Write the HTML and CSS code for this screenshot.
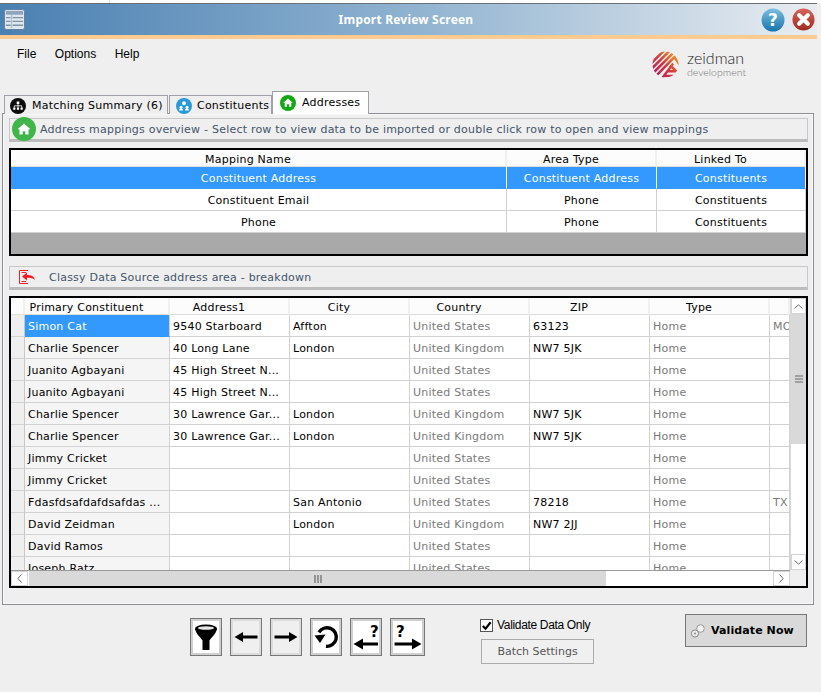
FILE: index.html
```html
<!DOCTYPE html>
<html lang="en">
<head>
<meta charset="utf-8">
<title>Import Review Screen</title>
<link rel="stylesheet" href="styles.css">
</head>
<body>
<div class="strip"><span class="strip-line"></span></div>
<header class="titlebar">
  <svg class="app-icon" viewBox="0 0 22 22">
    <rect x="0.5" y="0.5" width="21" height="21" rx="2" fill="#dfe6ee" stroke="#5c7fa3"/>
    <rect x="2" y="2" width="18" height="4" fill="#8fa5bb"/>
    <path d="M2 9h5M9 9h11M2 13h5M9 13h11M2 17h5M9 17h11" stroke="#7e93a8" stroke-width="1.4"/>
    <path d="M8 6v14" stroke="#a9b8c7"/>
  </svg>
  <h1 class="title">Import Review Screen</h1>
  <div class="win-buttons">
    <svg class="help" viewBox="0 0 24 24">
      <defs><linearGradient id="hg" x1="0" y1="0" x2="0" y2="1"><stop offset="0" stop-color="#7cc0e2"/><stop offset="1" stop-color="#1673ab"/></linearGradient></defs>
      <circle cx="12" cy="12" r="11.5" fill="url(#hg)"/>
      <text x="12" y="18" text-anchor="middle" class="help-q">?</text>
    </svg>
    <svg class="close" viewBox="0 0 24 24">
      <defs><linearGradient id="cg" x1="0" y1="0" x2="0" y2="1"><stop offset="0" stop-color="#d8665a"/><stop offset="1" stop-color="#a02a1e"/></linearGradient></defs>
      <circle cx="12" cy="12" r="11.5" fill="url(#cg)"/>
      <path d="M7.5 7.5l9 9M16.5 7.5l-9 9" stroke="#fff" stroke-width="4.4" stroke-linecap="round"/>
    </svg>
  </div>
</header>
<div class="menu-row">
  <nav class="menu"><span>File</span><span>Options</span><span>Help</span></nav>
  <div class="logo">
    <svg class="logo-mark" viewBox="0 0 28 28">
      <defs>
        <clipPath id="lc"><circle cx="14" cy="14" r="13.5"/></clipPath>
        <linearGradient id="lg" gradientUnits="userSpaceOnUse" x1="2" y1="26" x2="26" y2="4"><stop offset="0" stop-color="#b01f5e"/><stop offset="0.5" stop-color="#d5353f"/><stop offset="1" stop-color="#f29a1f"/></linearGradient>
      </defs>
      <g clip-path="url(#lc)" fill="none" stroke="url(#lg)" stroke-width="2.6">
        <path d="M-2 8L8 -2M-2 14L14 -2M-2 20L20 -2M-1 25L27 -3M5 25L24 5.500M10 29L22 13M17 21H30M12 26H30"/>
        <path d="M23 6L30 16M19 15L25 21"/>
      </g>
    </svg>
    <div class="logo-text"><span class="logo-name">zeidman</span><span class="logo-sub">development</span></div>
  </div>
</div>
<div class="tabs">
  <div class="tab">
    <svg class="tab-icon" viewBox="0 0 16 16"><circle cx="8" cy="8" r="8" fill="#0c0c0c"/><path d="M6.7 3.5h2.6v2.4H6.7zM3.2 9.4h2.2v2.4H3.2zM6.9 9.4h2.2v2.4H6.9zM10.6 9.4h2.2v2.4h-2.2z" fill="#fff"/><path d="M8 5.500v4M4.300 9.500V7.800h7.400v1.700" stroke="#fff" fill="none" stroke-width=".8"/></svg>
    <span>Matching Summary (6)</span>
  </div>
  <div class="tab">
    <svg class="tab-icon" viewBox="0 0 16 16"><circle cx="8" cy="8" r="8" fill="#2a9ad6"/><circle cx="8" cy="5.200" r="1.900" fill="#fff"/><circle cx="5" cy="9.200" r="1.500" fill="#fff"/><circle cx="11" cy="9.200" r="1.500" fill="#fff"/><path d="M3 12.400c.2-1.600 1-2.200 2-2.200s1.800.6 2 2.200zM9 12.400c.2-1.600 1-2.200 2-2.200s1.800.6 2 2.200z" fill="#fff"/></svg>
    <span>Constituents</span>
  </div>
  <div class="tab tab-active">
    <svg class="tab-icon" viewBox="0 0 16 16"><circle cx="8" cy="8" r="8" fill="#12a812"/><path d="M8 3.600L3.200 8h1.500v3.800h2.200V9.200h2.200v2.600h2.200V8h1.500z" fill="#fff"/></svg>
    <span>Addresses</span>
  </div>
</div>
<main class="panel">
  <div class="bar">
    <svg class="bar-home" viewBox="0 0 24 24"><circle cx="12" cy="12" r="12" fill="#3fb54a"/><path d="M12 6.500L5.500 12.200h2V17.500h3.200v-3.300h2.600v3.300h3.200v-5.300h2z" fill="#fff"/></svg>
    <span>Address mappings overview - Select row to view data to be imported or double click row to open and view mappings</span>
  </div>
  <section class="box box-top">
    <table class="map">
      <colgroup><col class="mc1"><col class="mc2"><col class="mc3"></colgroup>
      <thead><tr><th>Mapping Name</th><th>Area Type</th><th>Linked To</th></tr></thead>
      <tbody>
        <tr class="sel"><td>Constituent Address</td><td>Constituent Address</td><td>Constituents</td></tr>
        <tr><td>Constituent Email</td><td>Phone</td><td>Constituents</td></tr>
        <tr><td>Phone</td><td>Phone</td><td>Constituents</td></tr>
      </tbody>
    </table>
  </section>
  <div class="bar bar-two">
    <svg class="bar-back" viewBox="0 0 17 14">
      <path d="M9 .5H.5v13H9" fill="none" stroke="#f0202a"/>
      <path d="M2.500 2.500H7M2.500 11.500H7" stroke="#f0202a"/>
      <path d="M3 6.500L8 2.500v2.400c4 0 7 .8 8 5.100-1.500-1.800-4-2.300-8-2.300v2.800z" fill="#ee1c25"/>
    </svg>
    <span>Classy Data Source address area - breakdown</span>
  </div>
  <section class="box box-data">
    <div class="data-view">
      <table class="data">
        <colgroup><col class="dc0"><col class="dc1"><col class="dc2"><col class="dc2"><col class="dc2"><col class="dc2"><col class="dc2"><col class="dc7"></colgroup>
        <thead><tr><th></th><th>Primary Constituent</th><th>Address1</th><th>City</th><th>Country</th><th>ZIP</th><th>Type</th><th></th></tr></thead>
        <tbody>
          <tr><td class="rh"></td><td class="sel-cell">Simon Cat</td><td>9540 Starboard</td><td>Affton</td><td class="g">United States</td><td>63123</td><td class="g">Home</td><td class="g">MO</td></tr>
          <tr><td class="rh"></td><td class="pc">Charlie Spencer</td><td>40 Long Lane</td><td>London</td><td class="g">United Kingdom</td><td>NW7 5JK</td><td class="g">Home</td><td></td></tr>
          <tr><td class="rh"></td><td class="pc">Juanito Agbayani</td><td>45 High Street N...</td><td></td><td class="g">United States</td><td></td><td class="g">Home</td><td></td></tr>
          <tr><td class="rh"></td><td class="pc">Juanito Agbayani</td><td>45 High Street N...</td><td></td><td class="g">United States</td><td></td><td class="g">Home</td><td></td></tr>
          <tr><td class="rh"></td><td class="pc">Charlie Spencer</td><td>30 Lawrence Gar...</td><td>London</td><td class="g">United Kingdom</td><td>NW7 5JK</td><td class="g">Home</td><td></td></tr>
          <tr><td class="rh"></td><td class="pc">Charlie Spencer</td><td>30 Lawrence Gar...</td><td>London</td><td class="g">United Kingdom</td><td>NW7 5JK</td><td class="g">Home</td><td></td></tr>
          <tr><td class="rh"></td><td class="pc">Jimmy Cricket</td><td></td><td></td><td class="g">United States</td><td></td><td class="g">Home</td><td></td></tr>
          <tr><td class="rh"></td><td class="pc">Jimmy Cricket</td><td></td><td></td><td class="g">United States</td><td></td><td class="g">Home</td><td></td></tr>
          <tr><td class="rh"></td><td class="pc">Fdasfdsafdafdsafdas ...</td><td></td><td>San Antonio</td><td class="g">United States</td><td>78218</td><td class="g">Home</td><td class="g">TX</td></tr>
          <tr><td class="rh"></td><td class="pc">David Zeidman</td><td></td><td>London</td><td class="g">United Kingdom</td><td>NW7 2JJ</td><td class="g">Home</td><td></td></tr>
          <tr><td class="rh"></td><td class="pc">David Ramos</td><td></td><td></td><td class="g">United States</td><td></td><td class="g">Home</td><td></td></tr>
          <tr><td class="rh"></td><td class="pc">Joseph Ratz</td><td></td><td></td><td class="g">United States</td><td></td><td class="g">Home</td><td></td></tr>
        </tbody>
      </table>
    </div>
    <div class="vscroll">
      <div class="sb-btn sb-btn-v"><svg viewBox="0 0 9 5" class="chev-v"><path d="M.5 4.500L4.500 .8l4 3.700" fill="none" stroke="#666"/></svg></div>
      <div class="v-thumb"><svg viewBox="0 0 8 8" class="grip"><path d="M0 1h8M0 4h8M0 7h8" stroke="#666" stroke-width="1.2"/></svg></div>
      <div class="sb-fill"></div>
      <div class="sb-btn sb-btn-v"><svg viewBox="0 0 9 5" class="chev-v"><path d="M.5 .5l4 3.700 4-3.700" fill="none" stroke="#666"/></svg></div>
    </div>
    <div class="hscroll">
      <div class="sb-btn sb-btn-h"><svg viewBox="0 0 5 9" class="chev-h"><path d="M4.500 .5L.8 4.500l3.700 4" fill="none" stroke="#666"/></svg></div>
      <div class="h-thumb"><svg viewBox="0 0 8 8" class="grip"><path d="M1 0v8M4 0v8M7 0v8" stroke="#666" stroke-width="1.2"/></svg></div>
      <div class="sb-fill"></div>
      <div class="sb-btn sb-btn-h"><svg viewBox="0 0 5 9" class="chev-h"><path d="M.5 .5l3.700 4-3.700 4" fill="none" stroke="#666"/></svg></div>
    </div>
    <div class="corner"></div>
  </section>
</main>
<footer class="footer">
  <div class="tools">
    <button class="tool"><svg viewBox="0 0 26 30"><ellipse cx="13" cy="6.500" rx="11" ry="4" fill="#000"/><path d="M2 7c1 5 6 9 7.500 11.500V28h7V18.500C18 16 23 12 24 7z" fill="#000"/><ellipse cx="13" cy="6" rx="8" ry="1.800" fill="#e6e6e6"/></svg></button>
    <button class="tool tool-off"><svg viewBox="0 0 26 30"><path d="M1.500 15L10 10v3.600h14.500v2.800H10V20z" fill="#000"/></svg></button>
    <button class="tool tool-off"><svg viewBox="0 0 26 30"><path d="M24.500 15L16 10v3.600H1.500v2.800H16V20z" fill="#000"/></svg></button>
    <button class="tool"><svg viewBox="0 0 26 30"><path d="M5.950 10.350A9.300 9.300 0 1 1 13 24.300" fill="none" stroke="#000" stroke-width="3.400"/><path d="M1.500 13.500L12.500 12.500 7 21z" fill="#000"/></svg></button>
    <button class="tool"><svg viewBox="0 0 26 30"><text x="17" y="15" class="tool-q">?</text><path d="M.5 22L10 16.500v4H25v3H10v4z" fill="#000"/></svg></button>
    <button class="tool tool-wide"><svg viewBox="0 0 29 30"><text x="3" y="15" class="tool-q">?</text><path d="M28.500 22L19 16.500v4H1.500v3H19v4z" fill="#000"/></svg></button>
  </div>
  <div class="validate-opts">
    <label class="check"><span class="check-box"><svg viewBox="0 0 12 12"><path d="M2 6.500l3 3L10.500 2.500" fill="none" stroke="#000" stroke-width="2.400"/></svg></span><span>Validate Data Only</span></label>
    <button class="batch">Batch Settings</button>
  </div>
  <button class="validate">
    <svg viewBox="0 0 16 14"><circle cx="5" cy="9.500" r="3.600" fill="#eee" stroke="#888"/><circle cx="5" cy="9.500" r="1" fill="#888"/><circle cx="10.500" cy="4.500" r="3.800" fill="#f4f4f4" stroke="#999"/></svg>
    <span>Validate Now</span>
  </button>
</footer>
</body>
</html>
```
FILE: styles.css
```css
* { box-sizing: border-box; }
html, body { margin: 0; padding: 0; }
body {
  width: 821px;
  height: 692px;
  overflow: hidden;
  background: #efefef;
  font-family: "DejaVu Sans", Verdana, sans-serif;
  font-size: 11px;
  letter-spacing: .22px;
  color: #000;
  display: flex;
  flex-direction: column;
}
.strip { height: 3px; background: #fff; display: flex; padding-left: 109px; }
.strip-line { width: 1px; background: #dcdcdc; }
.titlebar {
  height: 36px;
  width: 817px;
  border-top: 1px solid #6a6f75;
  border-bottom: 4px solid #fdcb8f;
  background: linear-gradient(90deg, #4a80b2 0%, #8fb2d0 50%, #e9edf1 100%);
  display: flex;
  align-items: center;
  position: relative;
  padding: 0 2px 0 4px;
}
.app-icon { width: 21px; height: 21px; }
.title {
  margin: 0;
  flex: 1;
  text-align: center;
  font-family: "Noto Sans", sans-serif;
  font-size: 12px;
  font-weight: 700;
  letter-spacing: .2px;
  color: #fff;
  padding-left: 26px;
}
.win-buttons { display: flex; gap: 7px; align-items: center; }
.help, .close { width: 24px; height: 24px; display: block; }
.close { width: 23px; height: 23px; }
.help-q { font-family: "DejaVu Sans", sans-serif; font-size: 17px; font-weight: 700; fill: #fff; }
.menu-row {
  height: 54px;
  display: flex;
  justify-content: space-between;
  align-items: flex-start;
  padding: 7px 75px 0 17px;
}
.menu {
  display: flex;
  gap: 18.5px;
  font-family: "Liberation Sans", Arial, sans-serif;
  font-size: 12px;
  letter-spacing: 0;
  line-height: 16px;
}
.logo { display: flex; gap: 8px; margin-top: 4px; align-items: center; letter-spacing: 0; }
.logo-mark { width: 27px; height: 27px; }
.logo-text { display: flex; flex-direction: column; font-family: Lato, sans-serif; font-weight: 300; }
.logo-name { font-size: 16px; line-height: 16px; color: #222; }
.logo-sub { font-size: 10.5px; line-height: 12px; color: #777; }
.tabs { height: 21px; display: flex; align-items: flex-end; padding-left: 4px; gap: 1px; margin-bottom: -1px; position: relative; z-index: 2; }
.tab {
  height: 19px;
  display: flex;
  align-items: center;
  gap: 6px;
  padding: 1px 5px 0;
  border: 1px solid #a0a0aa;
  border-bottom: 0;
  background: #efefef;
  line-height: 18px;
  white-space: nowrap;
}
.tab:nth-child(1) { width: 164px; }
.tab:nth-child(2) { width: 103px; margin-right: -1px; padding-left: 6px; gap: 5px; }
.tab-icon { width: 16px; height: 16px; flex: none; }
.tab-active { height: 23px; width: 97px; background: #fff; padding: 0 7px 1px 7px; align-items: center; }
.panel {
  width: 812px;
  height: 492px;
  margin-left: 2px;
  border: 1px solid #8e8e98;
  box-shadow: inset 0 0 0 1px #f8f8f8;
  padding: 4px 6px 0;
  display: flex;
  flex-direction: column;
  gap: 6px;
}
.bar {
  height: 24px;
  flex: none;
  width: 799px;
  border: 1px solid #c8c8c8;
  border-bottom: 3px solid #bcbcbc;
  display: flex;
  align-items: center;
  gap: 4px;
  padding-left: 2px;
  color: #44546a;
  white-space: nowrap;
}
.bar-home { width: 24px; height: 24px; margin-top: -1px; flex: none; }
.bar-two { margin-top: 4px; padding-left: 9px; gap: 13px; }
.bar-back { width: 17px; height: 14px; flex: none; }
.box { width: 799px; flex: none; border: 2px solid #000; overflow: hidden; }
.box-top { height: 108px; background: #a9a9a9; }
.box-data {
  height: 292px;
  background: #fff;
  display: grid;
  grid-template-columns: 779px 16px;
  grid-template-rows: 272px 16px;
}
table { border-collapse: separate; border-spacing: 0; table-layout: fixed; }
th {
  font-weight: 400;
  height: 17px;
  padding: 3px 20px 0 0;
  background: #fcfcfc;
  border-right: 2px solid #f0f0f0;
  border-bottom: 1px solid #dedede;
  line-height: 13px;
  text-align: center;
  white-space: nowrap;
}
td {
  height: 22px;
  padding: 1px 0 0 3px;
  background: #fff;
  border-right: 1px solid #d2d2d2;
  border-bottom: 1px solid #d2d2d2;
  white-space: nowrap;
  overflow: hidden;
}
.map { width: 795px; }
.mc1 { width: 496px; }
.mc2 { width: 150px; }
.mc3 { width: 149px; }
.map td { text-align: center; padding: 1px 0 0; }
.map .sel td { background: #3399ff; color: #fff; border-bottom-color: #3399ff; border-right-color: #fff; }
.data-view { overflow: hidden; height: 272px; }
.data { width: 779px; }
.dc0 { width: 14px; }
.dc1 { width: 145px; }
.dc2 { width: 120px; }
.dc7 { width: 20px; }
.rh { background: #efefef; border-right: 1px solid #c8c8c8; padding: 0; }
.pc { background: #f5f5f5; }
.sel-cell { background: #3399ff; color: #fff; border-bottom-color: #3399ff; }
.g { color: #7a7a7a; }
.vscroll { display: flex; flex-direction: column; border-left: 1px solid #d8d8d8; background: #fff; }
.hscroll { display: flex; border-top: 1px solid #9a9a9a; background: #fff; }
.corner { background: #efefef; border-top: 1px solid #efefef; }
.sb-btn { flex: none; display: flex; align-items: center; justify-content: center; background: #fff; border: 1px solid #d4d4d4; }
.sb-btn-v { height: 16px; }
.sb-btn-h { width: 17px; }
.chev-v { width: 9px; height: 5px; }
.chev-h { width: 5px; height: 9px; }
.v-thumb { height: 130px; background: #d9d9d9; display: flex; align-items: center; justify-content: center; }
.h-thumb { width: 577px; margin-left: 1px; background: #d9d9d9; display: flex; align-items: center; justify-content: center; }
.grip { width: 8px; height: 8px; }
.sb-fill { flex: 1; }
.footer { display: flex; align-items: flex-start; padding: 9px 0 0 190px; }
.tools { display: flex; gap: 8px; margin-top: 4px; }
.tool {
  width: 32px;
  height: 38px;
  padding: 2px;
  margin: 0;
  background: #fff;
  border: 1px solid #777;
  box-shadow: inset 0 0 0 2px #d0d0d0;
  display: flex;
  align-items: center;
  justify-content: center;
}
.tool svg { width: 26px; height: 30px; display: block; }
.tool-off { background: #efefef; box-shadow: inset 0 0 0 2px #dcdcdc; }
.tool-wide { width: 35px; }
.tool-wide svg { width: 29px; }
.tool-q { font-family: "DejaVu Sans", sans-serif; font-size: 15px; font-weight: 700; fill: #000; }
.validate-opts { margin: 4px 0 0 55px; display: flex; flex-direction: column; gap: 7px; width: 113px; }
.check {
  display: flex;
  align-items: center;
  gap: 4px;
  height: 14px;
  font-family: "Liberation Sans", Arial, sans-serif;
  font-size: 12px;
  letter-spacing: -.33px;
  white-space: nowrap;
}
.check-box { width: 13px; height: 13px; background: #fff; border: 1px solid #555; display: flex; }
.check-box svg { width: 11px; height: 11px; }
.batch {
  width: 113px;
  height: 25px;
  margin: 0 0 0 1px;
  padding: 0;
  background: #f0f0f0;
  border: 1px solid #ababab;
  font: inherit;
  color: #555;
}
.validate {
  width: 122px;
  height: 33px;
  margin: 0 0 0 92px;
  padding: 0 0 0 4px;
  background: #d9d9d9;
  border: 1px solid #777;
  font: inherit;
  font-weight: 700;
  letter-spacing: .1px;
  display: flex;
  align-items: center;
  gap: 5px;
}
.validate svg { width: 16px; height: 14px; }
```
